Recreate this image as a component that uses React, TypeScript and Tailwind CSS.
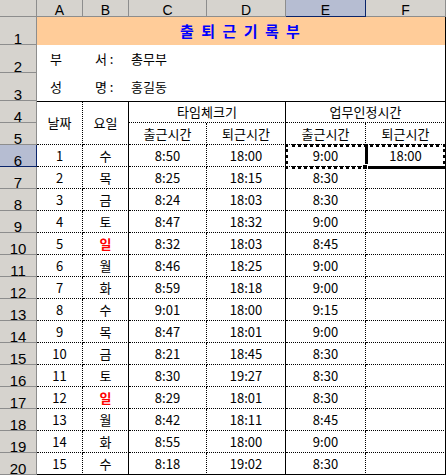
import React from 'react';

const days = [
  { n: 1, day: '수', inT: '8:50', outT: '18:00', okIn: '9:00', okOut: '18:00' },
  { n: 2, day: '목', inT: '8:25', outT: '18:15', okIn: '8:30', okOut: '' },
  { n: 3, day: '금', inT: '8:24', outT: '18:03', okIn: '8:30', okOut: '' },
  { n: 4, day: '토', inT: '8:47', outT: '18:32', okIn: '9:00', okOut: '' },
  { n: 5, day: '일', inT: '8:32', outT: '18:03', okIn: '8:45', okOut: '' },
  { n: 6, day: '월', inT: '8:46', outT: '18:25', okIn: '9:00', okOut: '' },
  { n: 7, day: '화', inT: '8:59', outT: '18:18', okIn: '9:00', okOut: '' },
  { n: 8, day: '수', inT: '9:01', outT: '18:00', okIn: '9:15', okOut: '' },
  { n: 9, day: '목', inT: '8:47', outT: '18:01', okIn: '9:00', okOut: '' },
  { n: 10, day: '금', inT: '8:21', outT: '18:45', okIn: '8:30', okOut: '' },
  { n: 11, day: '토', inT: '8:30', outT: '19:27', okIn: '8:30', okOut: '' },
  { n: 12, day: '일', inT: '8:29', outT: '18:01', okIn: '8:30', okOut: '' },
  { n: 13, day: '월', inT: '8:42', outT: '18:11', okIn: '8:45', okOut: '' },
  { n: 14, day: '화', inT: '8:55', outT: '18:00', okIn: '9:00', okOut: '' },
  { n: 15, day: '수', inT: '8:18', outT: '19:02', okIn: '8:30', okOut: '' },
];

// cell edges: the sheet mixes dotted and solid lines per side
const R_DOT = '[border-right:1px_dotted_#000]';
const R_SOL = '[border-right:1px_solid_#000]';
const B_DOT = '[border-bottom:1px_dotted_#000]';
const B_SOL = '[border-bottom:1px_solid_#000]';
const T_SOL = '[border-top:1px_solid_#000]';

const ColHead = ({ label, active }: { label: string; active?: boolean }) => (
  <div
    className={`flex items-end justify-center border-r border-b text-[14px] leading-[11px] font-['Liberation_Sans',Arial,sans-serif] ${
      active ? 'bg-[#b6bdd2] border-[#0a246a]' : 'bg-[#d6d3ce] border-[#8d8d8d]'
    }`}
  >
    {label}
  </div>
);

const RowHead = ({ n, active }: { n: number; active?: boolean }) => (
  <div
    className={`flex items-end justify-center border-r border-b text-[15px] leading-[11px] font-['Liberation_Sans',Arial,sans-serif] ${
      active ? 'bg-[#b6bdd2] border-[#0a246a]' : 'bg-[#d6d3ce] border-[#8d8d8d]'
    }`}
  >
    {n}
  </div>
);

const Cell = ({ children, className = '' }: { children?: React.ReactNode; className?: string }) => (
  <div className={`flex items-center justify-center bg-white ${className}`}>{children}</div>
);

export default function App() {
  return (
    <div className="relative w-[446px] h-[476px] overflow-hidden bg-white text-black font-['Noto_Sans_CJK_KR',sans-serif] text-[13px]">
      <div className="grid grid-cols-[37px_46px_46px_78px_79px_80px_80px] grid-rows-[17px_28px_28px_28px_repeat(17,22px)]">
        {/* column headers */}
        <div className="bg-[#d6d3ce] border-r border-b border-[#8d8d8d]" />
        {['A', 'B', 'C', 'D', 'E', 'F'].map((c) => (
          <ColHead key={c} label={c} active={c === 'E'} />
        ))}

        {/* title */}
        <RowHead n={1} />
        <div className={`col-span-6 flex items-center justify-center bg-[#ffcc99] text-[#0000ff] text-[15px] font-bold tracking-[2px] ${R_SOL}`}>
          출 퇴 근 기 록 부
        </div>

        <RowHead n={2} />
        <div className="flex items-center pl-[13px]">부</div>
        <div className="flex items-center pl-[12px]">서 :</div>
        <div className={`col-span-4 flex items-center pl-[2px] ${R_SOL}`}>총무부</div>

        <RowHead n={3} />
        <div className="flex items-center pl-[13px]">성</div>
        <div className="flex items-center pl-[12px]">명 :</div>
        <div className={`col-span-4 flex items-center pl-[2px] ${R_SOL}`}>홍길동</div>

        {/* table header */}
        <RowHead n={4} />
        <Cell className={`row-span-2 bg-[#ffff99] ${T_SOL} ${R_DOT} ${B_DOT}`}>날짜</Cell>
        <Cell className={`row-span-2 bg-[#ffff99] ${T_SOL} ${R_SOL} ${B_DOT}`}>요일</Cell>
        <Cell className={`col-span-2 bg-[#ffff99] ${T_SOL} ${R_SOL} ${B_DOT}`}>타임체크기</Cell>
        <Cell className={`col-span-2 bg-[#ffff99] ${T_SOL} ${R_SOL} ${B_DOT}`}>업무인정시간</Cell>

        <RowHead n={5} />
        <Cell className={`bg-[#ccffcc] ${R_DOT} ${B_DOT}`}>출근시간</Cell>
        <Cell className={`bg-[#ccffcc] ${R_SOL} ${B_DOT}`}>퇴근시간</Cell>
        <Cell className={`bg-[#ccffcc] ${R_DOT} ${B_DOT}`}>출근시간</Cell>
        <Cell className={`bg-[#ccffcc] ${R_SOL} ${B_DOT}`}>퇴근시간</Cell>

        {/* rows */}
        {days.map((d, i) => {
          const bottom = i === days.length - 1 ? B_SOL : B_DOT;
          const sunday = d.day === '일';
          return (
            <React.Fragment key={d.n}>
              <RowHead n={i + 6} active={i === 0} />
              <Cell className={`${R_DOT} ${bottom}`}>{d.n}</Cell>
              <Cell className={`${R_SOL} ${bottom} ${sunday ? 'text-[#ff0000] font-bold' : ''}`}>{d.day}</Cell>
              <Cell className={`${R_DOT} ${bottom}`}>{d.inT}</Cell>
              <Cell className={`${R_SOL} ${bottom}`}>{d.outT}</Cell>
              <Cell className={`${R_DOT} ${bottom}`}>{d.okIn}</Cell>
              <Cell className={`${R_SOL} ${bottom}`}>{d.okOut}</Cell>
            </React.Fragment>
          );
        })}
      </div>

      {/* copy marquee + active cell */}
      <div className="absolute left-[285px] top-[144px] w-[161px] h-[25px] border-[3px] border-dotted border-black pointer-events-none" />
      <div className="absolute left-[365px] top-[144px] w-[81px] h-[25px] border-l-[3px] border-b-[3px] border-black pointer-events-none" />
      <div className="absolute left-[362px] top-[164px] w-[6px] h-[6px] bg-black border border-white pointer-events-none" />
    </div>
  );
}
